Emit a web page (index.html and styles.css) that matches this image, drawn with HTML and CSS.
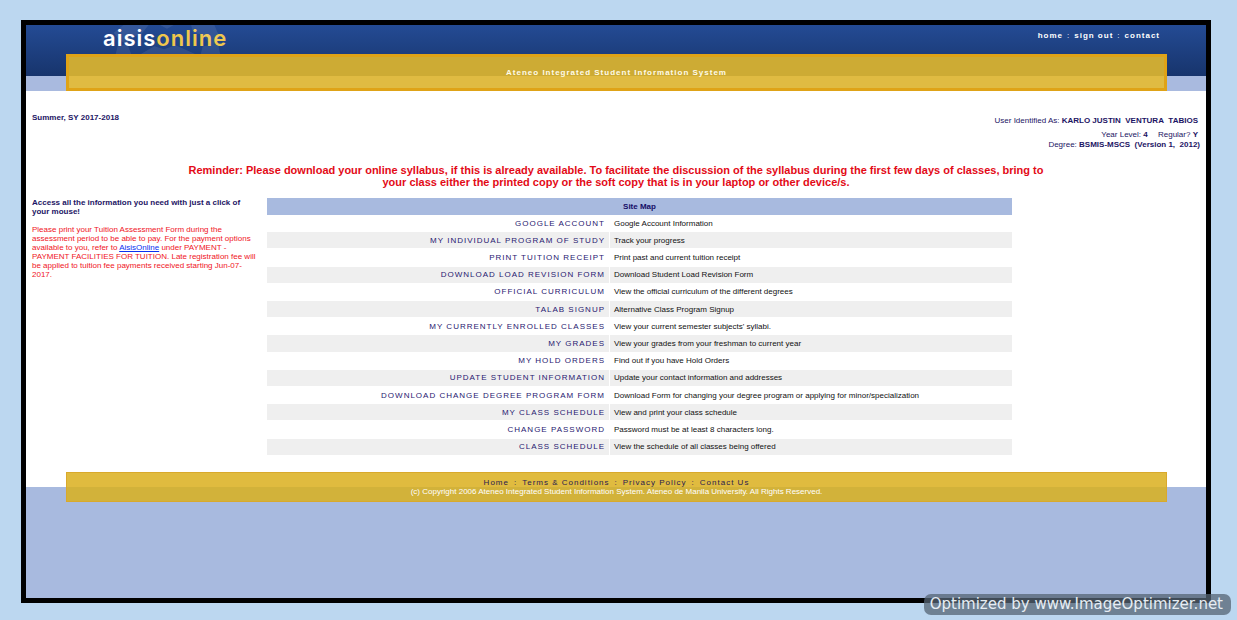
FILE: index.html
```html
<!DOCTYPE html>
<html lang="en">
<head>
<meta charset="utf-8">
<title>AISIS Online</title>
<link rel="stylesheet" href="styles.css">
</head>
<body>
<div class="frame">
  <header class="header">
    <div class="topbar">
      <div class="brand">
        <svg class="seal" viewBox="0 0 112 30" aria-hidden="true">
          <path d="M2 8 12 0H38L30 10 20 12 16 20 8 16ZM50 0H64L57 4ZM82 0H106L112 14 104 22 94 10 84 8ZM6 22 16 20 20 30H4ZM30 30 44 22 54 25 66 21 86 30ZM94 22 110 20 112 30H92Z"/>
        </svg>
        <span class="logo">aisis<span class="logo-accent">online</span></span>
      </div>
      <nav class="topnav"><a href="#">home</a><span>:</span><a href="#">sign out</a><span>:</span><a href="#">contact</a></nav>
    </div>
    <div class="banner">Ateneo Integrated Student Information System</div>
  </header>
  <main class="main">
    <section class="info">
      <b class="term">Summer, SY 2017-2018</b>
      <div class="user">
        <p class="user-name">User Identified As: <b>KARLO JUSTIN&nbsp; VENTURA&nbsp; TABIOS</b></p>
        <p class="user-year">Year Level: <b>4</b> <span class="regular">Regular? <b>Y</b></span></p>
        <p>Degree: <b>BSMIS-MSCS&nbsp; (Version 1,&nbsp; 2012)</b></p>
      </div>
    </section>
    <p class="reminder">Reminder: Please download your online syllabus, if this is already available. To facilitate the discussion of the syllabus during the first few days of classes, bring to your class either the printed copy or the soft copy that is in your laptop or other device/s.</p>
    <div class="columns">
      <aside class="notes">
        <p class="access">Access all the information you need with just a click of your mouse!</p>
        <p class="payment">Please print your Tuition Assessment Form during the assessment period to be able to pay. For the payment options available to you, refer to <a href="#">AisisOnline</a> under PAYMENT - PAYMENT FACILITIES FOR TUITION. Late registration fee will be applied to tuition fee payments received starting Jun-07-2017.</p>
      </aside>
      <table class="sitemap">
        <colgroup><col class="col-link"><col></colgroup>
        <thead><tr><th colspan="2">Site Map</th></tr></thead>
        <tbody>
        <tr><td><a href="#">GOOGLE ACCOUNT</a></td><td>Google Account Information</td></tr>
        <tr><td><a href="#">MY INDIVIDUAL PROGRAM OF STUDY</a></td><td>Track your progress</td></tr>
        <tr><td><a href="#">PRINT TUITION RECEIPT</a></td><td>Print past and current tuition receipt</td></tr>
        <tr><td><a href="#">DOWNLOAD LOAD REVISION FORM</a></td><td>Download Student Load Revision Form</td></tr>
        <tr><td><a href="#">OFFICIAL CURRICULUM</a></td><td>View the official curriculum of the different degrees</td></tr>
        <tr><td><a href="#">TALAB SIGNUP</a></td><td>Alternative Class Program Signup</td></tr>
        <tr><td><a href="#">MY CURRENTLY ENROLLED CLASSES</a></td><td>View your current semester subjects' syllabi.</td></tr>
        <tr><td><a href="#">MY GRADES</a></td><td>View your grades from your freshman to current year</td></tr>
        <tr><td><a href="#">MY HOLD ORDERS</a></td><td>Find out if you have Hold Orders</td></tr>
        <tr><td><a href="#">UPDATE STUDENT INFORMATION</a></td><td>Update your contact information and addresses</td></tr>
        <tr><td><a href="#">DOWNLOAD CHANGE DEGREE PROGRAM FORM</a></td><td>Download Form for changing your degree program or applying for minor/specialization</td></tr>
        <tr><td><a href="#">MY CLASS SCHEDULE</a></td><td>View and print your class schedule</td></tr>
        <tr><td><a href="#">CHANGE PASSWORD</a></td><td>Password must be at least 8 characters long.</td></tr>
        <tr><td><a href="#">CLASS SCHEDULE</a></td><td>View the schedule of all classes being offered</td></tr>
        </tbody>
      </table>
    </div>
  </main>
  <footer class="footer">
    <div class="footer-box">
      <nav class="footnav"><a href="#">Home</a><span>:</span><a href="#">Terms &amp; Conditions</a><span>:</span><a href="#">Privacy Policy</a><span>:</span><a href="#">Contact Us</a></nav>
      <p class="copyright">(c) Copyright 2006 Ateneo Integrated Student Information System. Ateneo de Manila University. All Rights Reserved.</p>
    </div>
  </footer>
</div>
<div class="watermark">Optimized by www.ImageOptimizer.net</div>
</body>
</html>
```
FILE: styles.css
```css
* { box-sizing: border-box; }
body {
  margin: 0;
  min-height: 100vh;
  padding: 20px 26px 17px 21px;
  display: flex;
  background: #bcd7f0;
  font: 8px/9px "Liberation Sans", Arial, sans-serif;
  color: #1c1464;
}
p { margin: 0; }
a { color: inherit; text-decoration: none; }
.frame {
  flex: 1;
  display: flex;
  flex-direction: column;
  border: 5px solid #000;
  background: #fff;
}
.header {
  padding: 0 39px 0 40px;
  background: linear-gradient(#244b94, #17346c) top / 100% 51px no-repeat #a9badf;
}
.topbar {
  display: flex;
  justify-content: space-between;
  height: 29px;
  padding: 0 7px 0 37px;
}
.brand { display: grid; }
.brand > * { grid-area: 1 / 1; }
.seal { width: 112px; height: 29px; margin-left: 7px; fill: #fff; opacity: 0.08; }
.logo {
  font: 600 22px/27px Inter, sans-serif;
  letter-spacing: 1px;
  color: #fff;
}
.logo-accent { color: #efc74c; }
.topnav {
  display: flex;
  gap: 4px;
  padding-top: 6px;
  font-weight: bold;
  line-height: 10px;
  letter-spacing: 1px;
  color: #fff;
}
.topnav span, .footnav span { font-weight: normal; }
.banner {
  border: 3px solid #dfa317;
  background: linear-gradient(#cdab34 19px, #e0bb42 19px);
  color: #fffbe8;
  font-weight: bold;
  line-height: 31px;
  letter-spacing: 1px;
  text-align: center;
}
.main { padding: 22px 6px 16px; }
.info { display: flex; justify-content: space-between; }
.user { text-align: right; padding-top: 3px; line-height: 10px; }
.user-name { padding: 0 2px 4px 0; }
.user-year { padding-right: 2px; }
.regular { padding-left: 8px; }
.reminder {
  padding: 14px 152px 10px;
  color: #e30a17;
  font-size: 11px;
  font-weight: bold;
  line-height: 12px;
  text-align: center;
}
.columns { display: flex; align-items: flex-start; }
.notes { width: 235px; padding-right: 8px; }
.access { font-weight: bold; padding: 0 4px 9px 0; }
.payment { color: #f0141e; }
.payment a { color: #0a30f0; text-decoration: underline; }
.sitemap {
  width: 745px;
  height: 258px;
  border-collapse: separate;
  border-spacing: 0;
  table-layout: fixed;
  color: #111;
}
.col-link { width: 343px; }
.sitemap th {
  height: 17px;
  background: #a8badf;
  color: #150c66;
  padding: 0;
}
.sitemap td { padding: 0 4px; border-bottom: 1px solid #fff; }
.sitemap td:first-child {
  border-right: 1px solid #fff;
  text-align: right;
  color: #28186f;
  letter-spacing: 1px;
}
.sitemap tbody tr:nth-child(even) { background: #efefef; }
.footer {
  flex: 1;
  padding: 0 39px 0 40px;
  background: linear-gradient(#fff 15px, #a8badf 15px);
}
.footer-box {
  border: 1px solid #d9a92c;
  padding: 5px 0;
  background: linear-gradient(#e0bb3f 14px, #d2b23a 14px);
  text-align: center;
}
.footnav {
  display: flex;
  justify-content: center;
  gap: 5px;
  color: #2a1c50;
  letter-spacing: 1px;
}
.copyright { color: #fff; }
.watermark {
  position: absolute;
  right: 6px;
  bottom: 5px;
  padding: 0 8px 0 6px;
  border-radius: 7px;
  background: rgba(85, 100, 116, 0.75);
  color: #e6edf3;
  font: 15px/21px "DejaVu Sans", sans-serif;
}
```
